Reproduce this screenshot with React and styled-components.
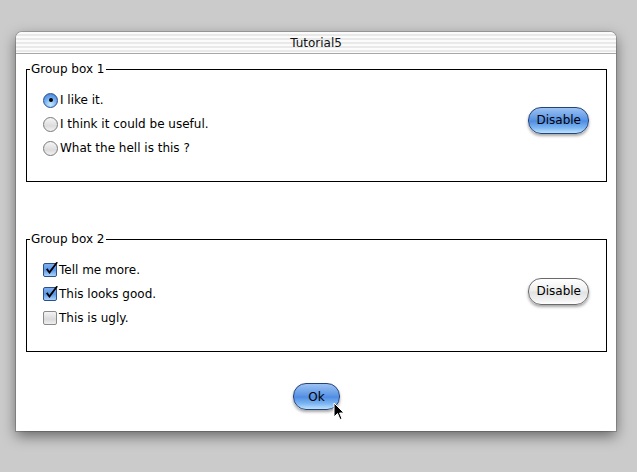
import styled, { createGlobalStyle, css } from "styled-components";

const Global = createGlobalStyle`
body {
  margin: 0;
  background: #cbcbcb;
  font-family: "DejaVu Sans", "Liberation Sans", sans-serif;
  font-size: 12px;
  color: #000;
}
`

const Page = styled.div`
width: 637px;
height: 472px;
padding: 32px 0 0 16px;
box-sizing: border-box;
position: relative;
`

const Window = styled.div`
width: 600px;
height: 399px;
background: #fff;
border-radius: 6px 6px 0 0;
box-shadow: 0 5px 14px rgba(0, 0, 0, 0.5), 0 0 0 1px rgba(0, 0, 0, 0.18);
display: flex;
flex-direction: column;
`

const TitleBar = styled.div`
height: 22px;
flex: none;
box-sizing: border-box;
border-radius: 6px 6px 0 0;
border-bottom: 1px solid #a8a8a8;
background: repeating-linear-gradient(to bottom, #fbfbfb 0 2px, #e9e9e9 2px 4px);
display: flex;
align-items: center;
justify-content: center;
font-size: 12px;
color: #111;
`

const Body = styled.div`
flex: 1;
padding: 8px 9px 0 10px;
display: flex;
flex-direction: column;
`

const Group = styled.fieldset`
margin: 0 0 ${p => p.$gap || 0}px 0;
padding: 12px 17px 21px 3px;
border: 1px solid #000;
min-width: 0;
`

const Legend = styled.legend`
padding: 0 1px;
line-height: 14px;
font-size: 12px;
`

const Inner = styled.div`
display: flex;
align-items: center;
justify-content: space-between;
padding-left: 13px;
`

const Options = styled.div`
display: flex;
flex-direction: column;
`

const Option = styled.label`
height: 24px;
display: flex;
align-items: center;
gap: 2px;
line-height: 14px;
`

const Radio = styled.span`
width: 15px;
height: 15px;
border-radius: 50%;
box-sizing: border-box;
flex: none;
position: relative;
${p => p.$on ? css`
  border: 1px solid #2c4f8c;
  background: radial-gradient(circle at 50% 80%, #c6ecff 0%, #6fa9ef 55%, #3f78d6 100%);
  &::after {
    content: "";
    position: absolute;
    left: 4.5px;
    top: 4.5px;
    width: 4px;
    height: 4px;
    border-radius: 50%;
    background: #000;
  }
` : css`
  border: 1px solid #7a7a7a;
  background: linear-gradient(to bottom, #f6f6f6 0%, #dcdcdc 60%, #f2f2f2 100%);
`}
`

const Check = styled.span`
width: 14px;
height: 14px;
box-sizing: border-box;
flex: none;
position: relative;
border-radius: 2px;
${p => p.$on ? css`
  border: 1px solid #2c4f8c;
  background: linear-gradient(to bottom, #7fb0ef 0%, #5b96e6 50%, #a9d4fb 100%);
` : css`
  border: 1px solid #8a8a8a;
  background: linear-gradient(to bottom, #f4f4f4 0%, #dadada 60%, #efefef 100%);
`}
svg {
  position: absolute;
  left: 0px;
  top: -3px;
}
`

const Button = styled.button`
font-family: inherit;
font-size: 12px;
color: #000;
height: 27px;
padding: 0 ${p => p.$pad || 7}px;
border-radius: 13px;
cursor: default;
box-shadow: 0 2px 3px rgba(0, 0, 0, 0.35);
margin-bottom: ${p => p.$lift || 0}px;
${p => p.$blue ? css`
  border: 1px solid #24437a;
  background: linear-gradient(to bottom, #9cc2f2 0%, #5d97e6 45%, #4f8ce3 52%, #7fb8f2 80%, #c1e2ff 100%);
` : css`
  border: 1px solid #6b6b6b;
  background: linear-gradient(to bottom, #ffffff 0%, #efefef 45%, #e2e2e2 52%, #f2f2f2 85%, #ffffff 100%);
`}
`

const Footer = styled.div`
display: flex;
justify-content: center;
padding-top: 31px;
`

const Cursor = styled.svg`
position: absolute;
left: 333px;
top: 402px;
`

const Tick = () => (
  <svg width="15" height="16" viewBox="0 0 15 16">
    <path d="M2 8.5 L5.5 13 L14 1.5 L12.3 1 L5.3 10 L3.6 7.2 Z" fill="#000" />
  </svg>
)

export default function App() {
  return (
    <Page>
      <Global />
      <Window>
        <TitleBar>Tutorial5</TitleBar>
        <Body>
          <Group $gap={50}>
            <Legend>Group box 1</Legend>
            <Inner>
              <Options>
                <Option><Radio $on />I like it.</Option>
                <Option><Radio />I think it could be useful.</Option>
                <Option><Radio />What the hell is this ?</Option>
              </Options>
              <Button $blue $lift={8}>Disable</Button>
            </Inner>
          </Group>
          <Group>
            <Legend>Group box 2</Legend>
            <Inner>
              <Options>
                <Option><Check $on><Tick /></Check>Tell me more.</Option>
                <Option><Check $on><Tick /></Check>This looks good.</Option>
                <Option><Check />This is ugly.</Option>
              </Options>
              <Button $lift={6}>Disable</Button>
            </Inner>
          </Group>
          <Footer>
            <Button $blue $pad={14}>Ok</Button>
          </Footer>
        </Body>
      </Window>
      <Cursor width="12" height="19" viewBox="0 0 12 19">
        <path d="M1 1 L1 15 L4.5 11.5 L7 17.5 L9 16.7 L6.6 11 L11 11 Z" fill="#000" stroke="#fff" strokeWidth="1" />
      </Cursor>
    </Page>
  )
}
